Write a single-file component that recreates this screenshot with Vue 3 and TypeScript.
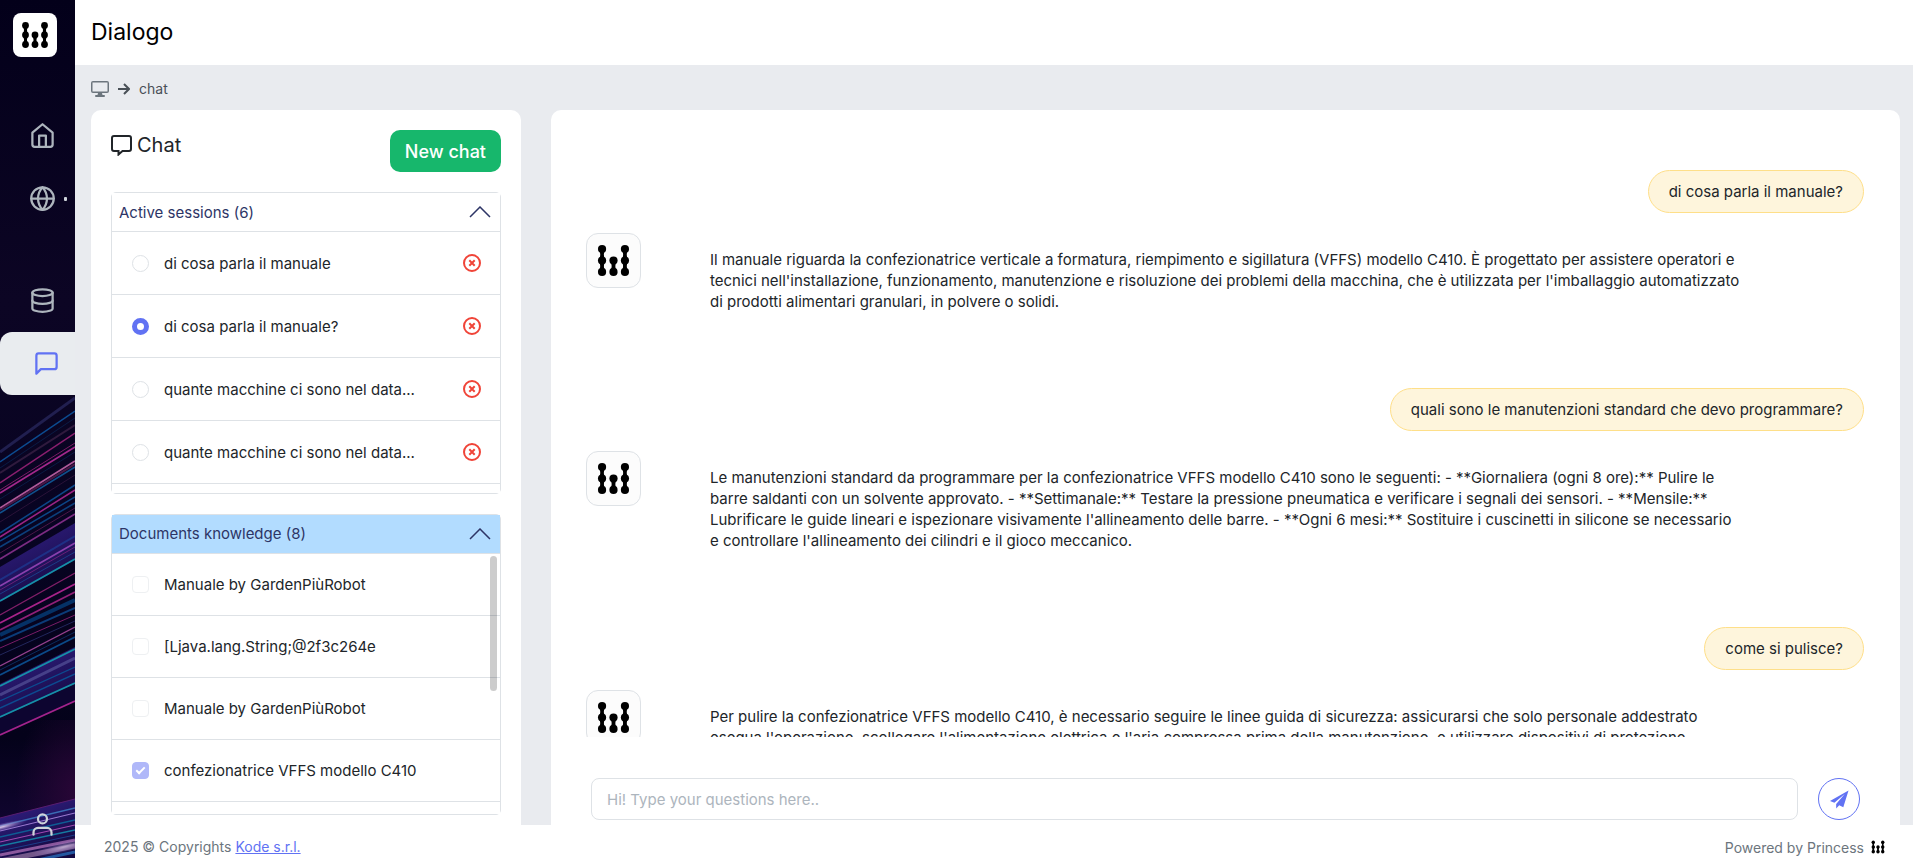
<script setup lang="ts">
import { ref, defineComponent, h } from 'vue'

interface Streak { from: number; to: number; width: number; color: string; opacity: number }
interface Message { role: 'user' | 'bot'; text: string }

const BrandMark = defineComponent({
  setup() {
    const dots = [[12.5, 12.5], [12.5, 22], [12.5, 31.5], [22, 22], [22, 31.5], [31.5, 12.5], [31.5, 22], [31.5, 31.5]]
    const links = [[12.5, 12.5], [12.5, 22], [22, 22], [31.5, 12.5], [31.5, 22]]
    return () => h('svg', { viewBox: '0 0 44 44', 'aria-hidden': 'true' }, [
      ...dots.map(([cx, cy]) => h('circle', { cx, cy, r: 3.4 })),
      ...links.map(([x, y]) => h('path', { d: `M${x - 2.6} ${y}Q${x - 0.4} ${y + 4.75} ${x - 2.6} ${y + 9.5}H${x + 2.6}Q${x + 0.4} ${y + 4.75} ${x + 2.6} ${y}z` })),
    ])
  },
})

const s = (from: number, to: number, width: number, color: string, opacity = 1): Streak => ({ from, to, width, color, opacity })
const streaks: Streak[] = [
  s(452, 398, 3, '#2b2b62', 0.7), s(462, 411, 1.5, '#0c4b90'), s(468, 418, 1, '#0b2c5c', 0.6), s(473, 425, 2, '#3a2045', 0.8),
  s(483, 433, 1.5, '#8a1f6e'), s(490, 443, 1, '#7a1c66'), s(493, 447, 1.6, '#a3288c'), s(499, 452, 1, '#0b2c5c', 0.6),
  s(508, 461, 1.8, '#b05a9a'), s(510, 464, 2, '#5a1d50', 0.8), s(513, 467, 1.5, '#10508c'), s(522, 475, 1, '#33163f', 0.8),
  s(533, 485, 1.5, '#0c4687'), s(537, 490, 1.5, '#9b2484'), s(541, 497, 1.5, '#0c4687'), s(547, 503, 1.6, '#0c3e7a'),
  s(553, 508, 1, '#4a1648'), s(559, 514, 1.6, '#7c2c82'), s(580, 536, 2, '#1c3c96', 0.7), s(586, 543, 1.6, '#8a40ae'),
  s(590, 547, 1, '#6a2078'), s(594, 552, 1, '#1c3c86'), s(601, 559, 1.8, '#1590a8'), s(615, 573, 1.2, '#801f68'),
  s(623, 584, 1.7, '#a8238a'), s(630, 592, 1.7, '#912078'), s(635, 600, 4, '#06366e', 0.9), s(641, 608, 2, '#0c4b90', 0.8),
  s(648, 615, 1, '#7a1c66'), s(655, 621, 1, '#22275c'), s(666, 627, 1.4, '#94408e'), s(670, 632, 1, '#0b2c5c'),
  s(675, 637, 1.8, '#0b4a88'), s(686, 649, 1.8, '#1590a8'), s(695, 658, 3, '#565298', 0.7), s(701, 667, 1.2, '#0c4b90'),
  s(708, 674, 1.4, '#0c4b90'), s(717, 683, 1.8, '#1590a8'), s(735, 701, 1.6, '#a3238c'), s(818, 799, 1, '#5a1d70'),
  s(826, 808, 1.6, '#3a6cb4'), s(831, 813, 1.2, '#9a7ad0'), s(837, 820, 1.6, '#0f5c94'), s(842, 825, 1.2, '#a04ab0'),
  s(846, 830, 1.4, '#157aa0'), s(851, 835, 1.2, '#1c3c86'), s(855, 840, 3, '#a86ab0', 0.8), s(861, 846, 5, '#8a6a98', 0.8),
  s(868, 852, 3, '#2458a0'),
]

const sessionsOpen = ref(true)
const documentsOpen = ref(true)
const activeSession = ref(1)
const question = ref('')

const sessions = ref<string[]>([
  'di cosa parla il manuale',
  'di cosa parla il manuale?',
  'quante macchine ci sono nel data...',
  'quante macchine ci sono nel data...',
])
const documents = [
  { title: 'Manuale by GardenPiùRobot', checked: false },
  { title: '[Ljava.lang.String;@2f3c264e', checked: false },
  { title: 'Manuale by GardenPiùRobot', checked: false },
  { title: 'confezionatrice VFFS modello C410', checked: true },
]
const messages: Message[] = [
  { role: 'user', text: 'di cosa parla il manuale?' },
  { role: 'bot', text: "Il manuale riguarda la confezionatrice verticale a formatura, riempimento e sigillatura (VFFS) modello C410. È progettato per assistere operatori e tecnici nell'installazione, funzionamento, manutenzione e risoluzione dei problemi della macchina, che è utilizzata per l'imballaggio automatizzato di prodotti alimentari granulari, in polvere o solidi." },
  { role: 'user', text: 'quali sono le manutenzioni standard che devo programmare?' },
  { role: 'bot', text: "Le manutenzioni standard da programmare per la confezionatrice VFFS modello C410 sono le seguenti: - **Giornaliera (ogni 8 ore):** Pulire le barre saldanti con un solvente approvato. - **Settimanale:** Testare la pressione pneumatica e verificare i segnali dei sensori. - **Mensile:** Lubrificare le guide lineari e ispezionare visivamente l'allineamento delle barre. - **Ogni 6 mesi:** Sostituire i cuscinetti in silicone se necessario e controllare l'allineamento dei cilindri e il gioco meccanico." },
  { role: 'user', text: 'come si pulisce?' },
  { role: 'bot', text: "Per pulire la confezionatrice VFFS modello C410, è necessario seguire le linee guida di sicurezza: assicurarsi che solo personale addestrato esegua l'operazione, scollegare l'alimentazione elettrica e l'aria compressa prima della manutenzione, e utilizzare dispositivi di protezione" },
]
</script>

<template>
  <div class="app">
    <aside class="sidebar">
      <svg class="sidebar-art" viewBox="0 0 75 858" preserveAspectRatio="xMidYMax slice" aria-hidden="true">
        <defs>
          <linearGradient id="night" x1="0" y1="0" x2="0" y2="1">
            <stop offset="0" stop-color="#03001a" />
            <stop offset=".35" stop-color="#0c0524" />
            <stop offset=".6" stop-color="#080422" />
            <stop offset=".86" stop-color="#04021a" />
            <stop offset="1" stop-color="#150638" />
          </linearGradient>
          <linearGradient id="beam" x1="0" y1="0" x2="0.5" y2="1">
            <stop offset="0" stop-color="#35228a" />
            <stop offset="1" stop-color="#140a42" />
          </linearGradient>
          <radialGradient id="glow" cx="1" cy=".6" r=".8">
            <stop offset="0" stop-color="#280636" />
            <stop offset="1" stop-color="#280636" stop-opacity="0" />
          </radialGradient>
          <radialGradient id="flare">
            <stop offset="0" stop-color="#d8c8e8" />
            <stop offset="1" stop-color="#8a60c0" stop-opacity="0" />
          </radialGradient>
        </defs>
        <rect width="75" height="858" fill="url(#night)" />
        <rect y="720" width="75" height="120" fill="url(#glow)" />
        <path d="M0 567L75 523V560L0 602z" fill="url(#beam)" />
        <path d="M0 684L75 647V684L0 718z" fill="url(#beam)" />
        <path d="M0 718L75 684V701L0 735z" fill="#0d0530" />
        <path d="M0 818L75 799V858H0z" fill="url(#beam)" />
        <line v-for="(line, i) in streaks" :key="i" x1="0" x2="75" :y1="line.from" :y2="line.to"
          :stroke="line.color" :stroke-width="line.width" :stroke-opacity="line.opacity" />
        <ellipse cx="2" cy="827" rx="26" ry="4" fill="url(#flare)" transform="rotate(-14 2 827)" />
        <ellipse cx="64" cy="847" rx="34" ry="6" fill="url(#flare)" opacity=".7" transform="rotate(-14 64 847)" />
      </svg>
      <a class="brand" href="#" aria-label="Princess"><BrandMark /></a>
      <nav class="nav" aria-label="Main">
        <a href="#" aria-label="Home">
          <svg viewBox="0 0 24 24"><path d="M3 9.500 12 2l9 7.500V20a2 2 0 0 1-2 2H5a2 2 0 0 1-2-2z" /><path d="M9 22V12h6v10" /></svg>
        </a>
        <a class="with-dot" href="#" aria-label="Web">
          <svg viewBox="0 0 24 24"><circle cx="12" cy="12" r="10" /><path d="M2 12h20M12 2a15.300 15.300 0 0 1 4 10 15.300 15.300 0 0 1-4 10 15.300 15.300 0 0 1-4-10 15.300 15.300 0 0 1 4-10z" /></svg>
        </a>
        <a class="spaced" href="#" aria-label="Data">
          <svg viewBox="0 0 24 24"><ellipse cx="12" cy="5" rx="9" ry="3" /><path d="M21 12c0 1.660-4 3-9 3s-9-1.340-9-3" /><path d="M3 5v14c0 1.660 4 3 9 3s9-1.340 9-3V5" /></svg>
        </a>
        <a class="active" href="#" aria-label="Chat" aria-current="page">
          <svg viewBox="0 0 24 24"><path d="M21 15a2 2 0 0 1-2 2H7l-4 4V5a2 2 0 0 1 2-2h14a2 2 0 0 1 2 2z" /></svg>
        </a>
      </nav>
      <a class="profile" href="#" aria-label="Profile">
        <svg viewBox="0 0 24 24"><path d="M20 21v-2a4 4 0 0 0-4-4H8a4 4 0 0 0-4 4v2" /><circle cx="12" cy="7" r="4" /></svg>
      </a>
    </aside>

    <div class="page">
      <header class="topbar"><h1>Dialogo</h1></header>

      <nav class="crumbs" aria-label="Breadcrumb">
        <a href="#" aria-label="Dashboard">
          <svg class="monitor" viewBox="0 0 18 16"><path d="M2 0h14a2 2 0 0 1 2 2v8a2 2 0 0 1-2 2h-5l.5 2H13a1 1 0 0 1 0 2H5a1 1 0 0 1 0-2h1.500l.5-2H2a2 2 0 0 1-2-2V2a2 2 0 0 1 2-2zm-.5 1.500v9h15v-9z" fill-rule="evenodd" /></svg>
        </a>
        <svg class="arrow" viewBox="0 0 12 12" aria-hidden="true"><path d="M0 6h11M6 1l5 5-5 5" /></svg>
        <span>chat</span>
      </nav>

      <main class="content">
        <section class="card side">
          <div class="side-head">
            <h2>
              <svg viewBox="0 0 21 21" aria-hidden="true"><path d="M3 1h15a2 2 0 0 1 2 2v11a2 2 0 0 1-2 2h-6.500l-4 3.500V16H3a2 2 0 0 1-2-2V3a2 2 0 0 1 2-2z" /></svg>
              Chat
            </h2>
            <button class="new-chat" type="button">New chat</button>
          </div>

          <section class="panel">
            <button class="panel-head" type="button" :aria-expanded="sessionsOpen" @click="sessionsOpen = !sessionsOpen">
              Active sessions (6)
              <svg viewBox="0 0 22 12" aria-hidden="true"><path d="M1 11 11 1l10 10" /></svg>
            </button>
            <ul v-show="sessionsOpen" class="rows sessions">
              <li v-for="(title, i) in sessions" :key="i">
                <input :id="`session-${i}`" v-model="activeSession" type="radio" name="session" :value="i">
                <label :for="`session-${i}`">{{ title }}</label>
                <button class="remove" type="button" :aria-label="`Delete ${title}`">
                  <svg viewBox="0 0 18 18"><circle cx="9" cy="9" r="8" /><path d="m6.300 6.300 5.400 5.400m0-5.400-5.400 5.400" /></svg>
                </button>
              </li>
            </ul>
          </section>

          <section class="panel documents">
            <button class="panel-head" type="button" :aria-expanded="documentsOpen" @click="documentsOpen = !documentsOpen">
              Documents knowledge (8)
              <svg viewBox="0 0 22 12" aria-hidden="true"><path d="M1 11 11 1l10 10" /></svg>
            </button>
            <ul v-show="documentsOpen" class="rows">
              <li v-for="(doc, i) in documents" :key="i">
                <input :id="`document-${i}`" type="checkbox" :checked="doc.checked" disabled>
                <label :for="`document-${i}`">{{ doc.title }}</label>
              </li>
            </ul>
            <span class="scroll-thumb" aria-hidden="true"></span>
          </section>
        </section>

        <section class="card talk">
          <div class="messages">
            <template v-for="(message, i) in messages" :key="i">
              <p v-if="message.role === 'user'" class="bubble">{{ message.text }}</p>
              <article v-else class="reply">
                <span class="avatar"><BrandMark /></span>
                <p>{{ message.text }}</p>
              </article>
            </template>
          </div>
          <form class="composer" @submit.prevent>
            <input v-model="question" type="text" aria-label="Question" placeholder="Hi! Type your questions here..">
            <button type="submit" aria-label="Send">
              <svg viewBox="0 0 20 20"><path d="M19.500.5 0 11.500l4.600 2L15.500 4.200 6.500 14.800V19.500l3.200-3.400 4.300 2z" /></svg>
            </button>
          </form>
        </section>
      </main>

      <footer class="footer">
        <span>2025 © Copyrights <a href="#">Kode s.r.l.</a></span>
        <span class="powered">Powered by Princess <BrandMark class="mini" /></span>
      </footer>
    </div>
  </div>
</template>

<style>
body { margin: 0; }
</style>

<style scoped>
.app {
  display: grid;
  grid-template-columns: 75px minmax(0, 1fr);
  height: 100vh;
  overflow: hidden;
  background: #e9ebef;
  color: #212529;
  font-family: Inter, "Liberation Sans", sans-serif;
  font-size: 15px;
  line-height: 21px;
}
.app *, .app *::before, .app *::after { box-sizing: border-box; }
h1, h2, p, ul { margin: 0; padding: 0; font-weight: 400; }
button, input { font: inherit; }
button { cursor: pointer; }
svg { display: block; flex: none; }

.sidebar { position: relative; display: flex; flex-direction: column; min-height: 0; overflow: hidden; }
.sidebar-art { position: absolute; inset: 0; width: 100%; height: 100%; }
.brand {
  position: relative;
  width: 44px;
  margin: 13px 0 0 13px;
  border-radius: 8px;
  background: #fff;
}
.nav { position: relative; display: flex; flex-direction: column; margin-top: 47px; }
.nav a, .profile { display: flex; align-items: center; height: 63px; padding-left: 29px; color: #adb5bd; }
.nav svg, .profile svg { width: 27px; fill: none; stroke: currentColor; stroke-width: 2; stroke-linecap: round; stroke-linejoin: round; }
.nav .with-dot::after { content: ""; width: 3px; height: 4px; margin-left: 8px; border-radius: 1px; background: #ced4da; }
.nav .spaced { margin-top: 39px; }
.nav .active { padding-left: 33px; border-radius: 12px 0 0 12px; background: #e9ecef; color: #6172f3; }
.profile { position: relative; height: 27px; margin: auto 0 20px; color: #ced4da; }

.page { display: flex; flex-direction: column; min-width: 0; min-height: 0; }
.topbar { display: flex; align-items: center; flex: none; height: 65px; padding: 0 16px 2px; background: #fff; }
.topbar h1 { color: #000; font-size: 23px; line-height: 28px; }
.crumbs { display: flex; align-items: center; gap: 9px; flex: none; height: 45px; padding: 2px 16px 0; color: #495057; font-size: 14px; }
.monitor { width: 18px; fill: #6c757d; }
.arrow { width: 12px; fill: none; stroke: #495057; stroke-width: 2; }

.content { display: grid; grid-template-columns: 430px minmax(0, 1fr); gap: 30px; flex: 1; min-height: 0; padding: 0 13px 0 16px; }
.card { display: flex; flex-direction: column; min-width: 0; min-height: 0; border-radius: 10px 10px 0 0; background: #fff; }
.side { gap: 20px; padding: 20px 20px 10px; }
.side-head { display: flex; justify-content: space-between; align-items: flex-start; flex: none; }
.side-head h2 { display: flex; align-items: center; gap: 5px; font-size: 20px; line-height: 31px; }
.side-head h2 svg { width: 21px; fill: none; stroke: #212529; stroke-width: 2; }
.new-chat { height: 42px; padding: 0 15px; border: 0; border-radius: 10px; background: #17b76c; color: #fff; font-size: 18px; font-weight: 500; }

.panel { position: relative; display: flex; flex-direction: column; flex: 1; min-height: 0; border: 1px solid #dee2e6; border-radius: 5px; }
.panel-head {
  display: flex;
  justify-content: space-between;
  align-items: center;
  flex: none;
  height: 39px;
  padding: 0 9px 0 7px;
  border: 0;
  border-bottom: 1px solid #dee2e6;
  background: #fff;
  color: #2d3566;
}
.panel-head svg { width: 22px; fill: none; stroke: #2d3566; stroke-width: 1.5; }
.documents .panel-head { background: #b2dcff; }
.rows { flex: 1; min-height: 0; overflow: hidden; list-style: none; background: #fff; }
.rows li { display: flex; align-items: center; height: 62px; padding: 0 19px 0 20px; border-bottom: 1px solid #dee2e6; }
.rows.sessions li { height: 63px; }
.rows label { flex: 1; padding-left: 15px; }
.rows input { appearance: none; flex: none; width: 17px; height: 17px; margin: 0; border: 1px solid #dee2e6; background: #fff; }
.rows input[type="radio"] { border-radius: 50%; }
.rows input[type="radio"]:checked { border: 5px solid #6172f3; }
.rows input[type="checkbox"] { display: grid; place-items: center; border-color: #eef0f2; border-radius: 4px; }
.rows input[type="checkbox"]:checked { border-color: #b0b8f9; background: #b0b8f9; }
.rows input[type="checkbox"]:checked::before {
  content: "";
  width: 9px;
  height: 5px;
  border: solid #fff;
  border-width: 0 0 2px 2px;
  transform: translateY(-1px) rotate(-45deg);
}
.remove { padding: 0; border: 0; background: none; }
.remove svg { width: 18px; fill: none; stroke: #f04438; stroke-width: 2; }
.scroll-thumb { position: absolute; top: 41px; right: 3px; width: 7px; height: 135px; border-radius: 4px; background: rgba(0, 0, 0, .2); }

.messages { display: flex; flex-direction: column; flex: 1; min-height: 0; overflow: hidden; padding: 60px 36px 0 35px; }
.bubble { flex: none; align-self: flex-end; padding: 10px 20px; border: 1px solid #fedf89; border-radius: 22px; background: #fef5dc; }
.reply { display: flex; align-items: flex-start; flex: none; padding: 20px 122px 76px 0; }
.avatar { flex: none; width: 55px; margin-right: 69px; border: 1px solid #dee2e6; border-radius: 12px; background: #fcfcfc; }
.reply p { flex: 1; padding-top: 16px; }
.composer { display: flex; gap: 20px; flex: none; padding: 41px 40px 5px; }
.composer input { flex: 1; min-width: 0; height: 42px; padding: 0 15px; border: 1px solid #dee2e6; border-radius: 8px; background: #fff; color: #212529; outline: 0; }
.composer input::placeholder { color: #adb5bd; opacity: 1; }
.composer button { display: grid; place-items: center; flex: none; width: 42px; height: 42px; padding: 0; border: 1px solid #6172f3; border-radius: 50%; background: #fff; }
.composer button svg { width: 19px; fill: #6172f3; }

.footer { display: flex; justify-content: space-between; align-items: flex-start; flex: none; height: 33px; padding: 11px 24px 0 29px; background: #fff; color: #6c757d; font-size: 14px; }
.footer a { color: #6172f3; }
.powered { display: flex; align-items: center; gap: 3px; }
.mini { width: 22px; height: 22px; fill: #000; }
</style>
